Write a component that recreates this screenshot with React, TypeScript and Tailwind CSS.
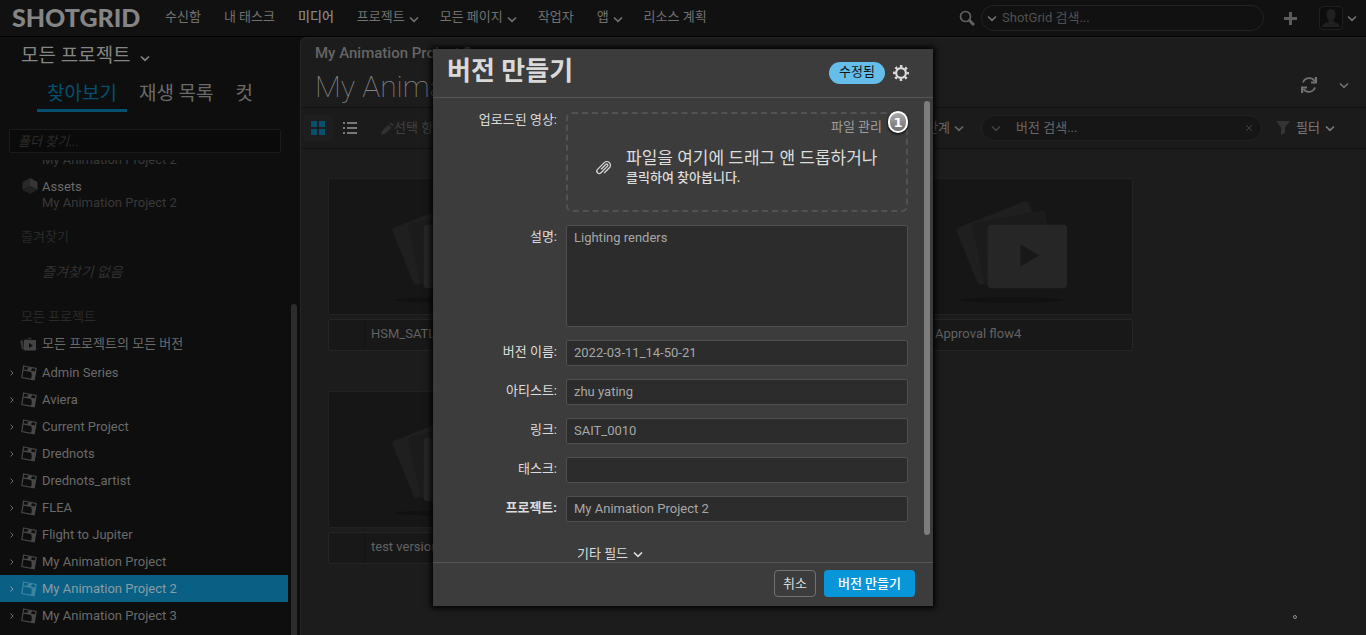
import React from 'react';
import { clsx } from 'clsx';

const navItems = [
  { label: '수신함' },
  { label: '내 태스크' },
  { label: '미디어', active: true },
  { label: '프로젝트', menu: true },
  { label: '모든 페이지', menu: true },
  { label: '작업자' },
  { label: '앱', menu: true },
  { label: '리소스 계획' },
];

const projects = [
  'Admin Series',
  'Aviera',
  'Current Project',
  'Drednots',
  'Drednots_artist',
  'FLEA',
  'Flight to Jupiter',
  'My Animation Project',
  'My Animation Project 2',
  'My Animation Project 3',
];

const versions = ['HSM_SATL_0010', '', 'Approval flow4', 'test version'];

const fields = [
  { id: 'name', label: '버전 이름:', value: '2022-03-11_14-50-21' },
  { id: 'artist', label: '아티스트:', value: 'zhu yating' },
  { id: 'link', label: '링크:', value: 'SAIT_0010' },
  { id: 'task', label: '태스크:', value: '' },
  { id: 'project', label: '프로젝트:', value: 'My Animation Project 2', required: true },
];

const Chevron = ({ className = '' }: { className?: string }) => (
  <svg viewBox="0 0 12 12" className={clsx('w-3 h-3 shrink-0', className)} fill="none" stroke="currentColor" strokeWidth="1.7">
    <path d="M2 4.500l4 3.800 4-3.800" />
  </svg>
);

const ProjectIcon = () => (
  <svg viewBox="0 0 16 16" className="w-4 h-4 shrink-0">
    <path d="M2.600 1L15.200 3.400 13.200 14.900.8 12.500z" fill="none" stroke="currentColor" strokeWidth="1.200" />
    <path d="M2.200 4.200l4 .8 1-2.600 3.800.7-1 2.600 4.900.900-1.700 8.300-3.400-.7c1.200-2.600 1.300-4.800.2-7.200L1.800 5.600z" fill="currentColor" />
  </svg>
);

const AllVersionsIcon = () => (
  <svg viewBox="0 0 16 14" className="w-4 h-3.5 shrink-0 text-[#444444]">
    <path d="M0 4l3-1 1 9-2 1zM3.500 2.800L11 .5l.5 1.700H6L4 4z" fill="currentColor" opacity=".7" />
    <rect x="4" y="3" width="12" height="10.500" rx="1" fill="currentColor" />
    <path d="M9 6v5l4-2.500z" fill="#0e0e0e" />
  </svg>
);

const AssetIcon = () => (
  <svg viewBox="0 0 16 16" className="w-4 h-4 shrink-0">
    <path d="M8 0l7.500 4v8L8 8z" fill="#363636" />
    <path d="M8 0L.5 4v8L8 8z" fill="#292929" />
    <path d="M8 8l7.500 4L8 16 .5 12z" fill="#212121" />
  </svg>
);

const VersionArt = () => (
  <svg viewBox="0 0 240 136" className="w-full h-full">
    <ellipse cx="119" cy="122" rx="54" ry="2.500" fill="#111111" />
    <g strokeLinejoin="round" strokeWidth="7">
      <path d="M67 52l66-26 24 51-69 26z" fill="#1f1f1f" stroke="#1f1f1f" />
      <path d="M83 48l67-13 10 55-65 13z" fill="#1b1b1b" stroke="#1b1b1b" />
    </g>
    <rect x="95" y="46" width="80" height="64" rx="4" fill="#262626" />
    <path d="M128 66v22l19-11z" fill="#181818" />
  </svg>
);

const Header = () => (
  <header className="h-[37px] shrink-0 flex items-center pl-3 pr-2 bg-[#111111] border-b border-black text-[#717171]">
    <div className="w-[149px] shrink-0 pb-0.5 font-[Lato] font-black text-[25px] leading-8 text-[#858585]">SHOTGRID</div>
    <nav className="flex items-center gap-5 pl-1 pb-0.5 whitespace-nowrap">
      {navItems.map((item) => (
        <a key={item.label} href="#" className={clsx('flex items-center', item.active && 'font-medium text-[#858585]', !item.menu && 'pr-[3px]')}>
          {item.label}
          {item.menu && <Chevron className="ml-[3px] mt-1" />}
        </a>
      ))}
    </nav>
    <div className="ml-auto flex items-center">
      <svg viewBox="0 0 16 16" className="w-4 h-4 mr-1.5" fill="none" stroke="#606060">
        <circle cx="6.500" cy="6.500" r="5" strokeWidth="1.700" />
        <path d="M10 10l5 5" strokeWidth="3" />
      </svg>
      <div className="w-[283px] h-[26px] flex items-center rounded-full border border-[#232323] pl-1">
        <Chevron />
        <input aria-label="ShotGrid 검색" placeholder="ShotGrid 검색..." className="flex-1 min-w-0 ml-1 bg-transparent outline-none placeholder:text-[#505050]" />
      </div>
      <button aria-label="추가" className="ml-5">
        <svg viewBox="0 0 13 13" className="w-[13px] h-[13px]">
          <path d="M5 0h3v5h5v3H8v5H5V8H0V5h5z" fill="#5c5c5c" />
        </svg>
      </button>
      <button aria-label="계정" className="ml-[22px] flex items-center gap-[3px]">
        <span className="w-6 h-6 rounded-sm border border-[#202020] bg-[#0d0d0d] flex items-end justify-center pb-0.5">
          <svg viewBox="0 0 20 18" className="w-5 h-[18px]" fill="#202020">
            <path d="M10 0c3 0 4.500 2 4.500 5 0 3-1 5-2 6v2c3 1 6 1.500 6.500 5H1c.5-3.500 3.500-4 6.500-5v-2c-1-1-2-3-2-6 0-3 1.500-5 4.500-5z" />
          </svg>
        </span>
        <Chevron />
      </button>
    </div>
  </header>
);

const Sidebar = () => (
  <aside className="w-[300px] shrink-0 flex flex-col bg-[#0e0e0e] text-[#6a6a6a]">
    <button className="flex items-center gap-2 h-9 pt-0.5 pl-[21px] text-[19px] text-[#858585]">
      모든 프로젝트
      <Chevron className="mt-1" />
    </button>
    <div className="flex items-center gap-3 h-[39px] pl-[37px] text-[19px]">
      <button className="h-full px-2.5 pt-1.5 border-b-[3px] border-[#05506f] text-[#05506f]">찾아보기</button>
      <button className="pt-1">재생 목록</button>
      <button className="ml-2.5 pt-1">컷</button>
    </div>
    <input
      aria-label="폴더 찾기"
      placeholder="폴더 찾기..."
      className="h-6 shrink-0 mt-[17px] ml-[9px] mr-[19px] px-2 rounded-xs border border-[#1b1b1b] bg-[#0a0a0a] italic outline-none placeholder:text-[#2c2c2c]"
    />
    <div className="flex-1 min-h-0 mt-[7px] flex">
      <div className="w-[288px] overflow-hidden">
        <div className="h-[18px] -mt-2 pl-[42px] leading-4 text-[#393939]">My Animation Project 2</div>
        <a href="#" className="flex gap-1 mt-2 pl-[22px]">
          <AssetIcon />
          <span className="pt-[1px] leading-4">
            Assets
            <br />
            <span className="text-[#393939]">My Animation Project 2</span>
          </span>
        </a>
        <h3 className="mt-4 pl-[21px] leading-5 text-[#292929]">즐겨찾기</h3>
        <p className="mt-[15px] pl-[42px] leading-5 italic text-[14px] text-[#313131]">즐겨찾기 없음</p>
        <h3 className="mt-[25px] pl-[21px] leading-5 text-[#292929]">모든 프로젝트</h3>
        <a href="#" className="flex items-center gap-1.5 h-[25px] mt-1 mb-[3px] pl-5">
          <AllVersionsIcon />
          모든 프로젝트의 모든 버전
        </a>
        {projects.map((name) => {
          const selected = name === 'My Animation Project 2';
          return (
            <a key={name} href="#" className={clsx('flex items-center h-[27px] pl-[9px]', selected && 'bg-[#0a6084] text-[#899ba3]')}>
              <svg viewBox="0 0 6 8" className="w-1.5 h-2 mr-1.5 shrink-0" fill="none" stroke="currentColor">
                <path d="M1.500 1.500L4 4 1.500 6.500" />
              </svg>
              <span className={selected ? 'text-[#3d84a2]' : 'text-[#484848]'}>
                <ProjectIcon />
              </span>
              <span className="ml-[5px]">{name}</span>
            </a>
          );
        })}
      </div>
      <div className="w-1.5 ml-[3px] mt-36 rounded-t-full bg-[#2d2d2d]" />
    </div>
  </aside>
);

const Toolbar = () => (
  <div className="h-[41px] shrink-0 flex items-center pl-0.5 pr-[30px] border-b border-[#121212] bg-[#1b1b1b] text-[#5c5c5c]">
    <button aria-label="썸네일 보기" className="w-[30px] h-[26px] flex items-center justify-center rounded-xs bg-[#1e1e1e] text-[#05506f]">
      <svg viewBox="0 0 14 14" className="w-3.5 h-3.5" fill="currentColor">
        <path d="M0 0h6v6H0zM8 0h6v6H8zM0 8h6v6H0zM8 8h6v6H8z" />
      </svg>
    </button>
    <button aria-label="목록 보기" className="ml-2.5 text-[#777777]">
      <svg viewBox="0 0 14 12" className="w-3.5 h-3" fill="currentColor">
        <path d="M0 0h2v2H0zM4 0h10v2H4zM0 5h2v2H0zM4 5h10v2H4zM0 10h2v2H0zM4 10h10v2H4z" />
      </svg>
    </button>
    <button className="ml-6 flex items-center text-[#424242]">
      <svg viewBox="0 0 13 13" className="w-[13px] h-[13px]" fill="#303030">
        <path d="M0 13l1-4 6.500-6.500 3 3L4 12zM8.500 1.500L10 0l3 3-1.500 1.500z" />
      </svg>
      선택 항목 편집
    </button>
    <button className="ml-auto mr-4 flex items-center gap-[3px] text-[#676767]">
      단계
      <Chevron />
    </button>
    <div className="w-[281px] h-[26px] flex items-center rounded-full border border-[#222222] bg-[#161616] px-2">
      <Chevron className="text-[#424242]" />
      <input aria-label="버전 검색" placeholder="버전 검색..." className="flex-1 min-w-0 ml-3.5 bg-transparent outline-none placeholder:text-[#676767]" />
      <button aria-label="지우기">
        <svg viewBox="0 0 8 8" className="w-2 h-2" fill="none" stroke="#424242">
          <path d="M1 1l6 6M7 1L1 7" />
        </svg>
      </button>
    </div>
    <button className="ml-3.5 flex items-center gap-1 text-[#7b7b7b]">
      <svg viewBox="0 0 14 14" className="w-3.5 h-3.5 mr-0.5" fill="#343434">
        <path d="M0 0h14L9 6.500V12l-4 2V6.500z" />
      </svg>
      필터
      <Chevron />
    </button>
  </div>
);

const Main = () => (
  <main className="flex-1 min-w-0 flex flex-col rounded-tl-md border-t border-l border-[#262626] bg-[#1c1c1c]">
    <div className="h-[70px] shrink-0 flex items-center justify-between pl-3.5 pr-4 border-b border-[#121212]">
      <div className="pt-1 whitespace-nowrap">
        <div className="text-[15px] leading-5 font-medium text-[#656565]">My Animation Project 2</div>
        <h1 className="mt-1 text-[30px] leading-10 font-thin text-[#858585]">My Animation Project 2</h1>
      </div>
      <div className="flex items-center gap-5 mt-6 text-[#717171]">
        <button aria-label="새로 고침">
          <svg viewBox="0 0 18 18" className="w-[18px] h-[18px]" fill="none" stroke="currentColor" strokeWidth="1.800">
            <path d="M3 6.500A6.500 6.500 0 0 1 14.500 5M15 11.500A6.500 6.500 0 0 1 3.500 13" />
            <path d="M17 1v6.500h-6v-2h3.800V1zM1 17v-6.500h6v2H3.200V17z" fill="currentColor" stroke="none" />
          </svg>
        </button>
        <button aria-label="페이지 메뉴">
          <Chevron />
        </button>
      </div>
    </div>
    <Toolbar />
    <div className="flex-1 min-h-0 overflow-hidden pl-[27px] pt-[29px] grid grid-cols-[repeat(auto-fill,241px)] auto-rows-min gap-x-[41px] gap-y-10">
      {versions.map((name, index) => (
        <article key={index}>
          <div className="h-[137px] rounded-xs border border-[#222222] bg-[#161616]">
            <VersionArt />
          </div>
          <div className="h-8 mt-1 flex items-center rounded-xs border border-[#252525] bg-[#181818] text-[#626262]">
            <span className="w-9 h-full border-r border-[#131313]" />
            <span className="ml-1.5 pb-0.5">{name}</span>
          </div>
        </article>
      ))}
    </div>
    <div className="h-5 shrink-0 flex justify-end pr-[69px]">
      <span className="w-1 h-1 rounded-full border border-[#8c8c8c]" />
    </div>
  </main>
);

const VersionDialog = () => (
  <div className="absolute inset-0 flex justify-center items-start pt-[49px]">
    <form role="dialog" aria-labelledby="dialog-title" className="w-[500px] flex flex-col bg-[#3c3c3c] text-[#dddddd] shadow-[0_0_6px_2px_#000000]">
      <div className="h-[49px] flex items-center pl-3.5 pr-6 border-b border-[#545454]">
        <h2 id="dialog-title" className="mb-1 text-[26px] leading-8 font-bold text-[#d9d9d9]">버전 만들기</h2>
        <span className="ml-auto h-[22px] px-2.5 rounded-full bg-[#65bde9] leading-5 text-[#141414]">수정됨</span>
        <button type="button" aria-label="설정" className="ml-2">
          <svg viewBox="0 0 16 16" className="w-4 h-4" fill="none" stroke="#dddddd">
            <circle cx="8" cy="8" r="4.900" strokeWidth="2.200" />
            <circle cx="8" cy="8" r="6.900" strokeWidth="2.200" strokeDasharray="2.500 2.919" strokeDashoffset="1.250" />
          </svg>
        </button>
      </div>
      <div className="h-[464px] flex overflow-hidden">
        <div className="flex-1 min-w-0 pt-2.5 pr-4">
          <div className="grid grid-cols-[124px_1fr] gap-x-[9px] gap-y-[13px]">
            <label htmlFor="upload" className="pt-0.5 text-right leading-5">업로드된 영상:</label>
            <div className="relative h-[100px] mt-1 flex items-center gap-3 pl-[26px] pt-3 rounded-md border-2 border-dashed border-[#525252]">
              <svg viewBox="0 0 20 20" className="w-5 h-5 shrink-0" fill="none" stroke="#d4d4d4" strokeWidth="1.300" strokeLinecap="round">
                <path transform="rotate(-45 10 10)" d="M7 13.600h7a3.600 3.600 0 0 0 0-7.200H4.500a2.400 2.400 0 0 0 0 4.800h9.300a1.200 1.200 0 0 0 0-2.400H7.500" />
              </svg>
              <button id="upload" type="button" className="text-left whitespace-nowrap text-[#dddddd]">
                <span className="block text-[17px] leading-5">파일을 여기에 드래그 앤 드롭하거나</span>
                <span className="block leading-5 font-medium">클릭하여 찾아봅니다.</span>
              </button>
              <button type="button" className="absolute top-[3px] right-6 leading-5 text-[#9c9c9c]">파일 관리</button>
              <span className="absolute -top-[3px] -right-0.5 w-5 h-[22px] rounded-full border-2 border-white bg-linear-to-b from-[#ababab] to-[#6f6f6f] text-center font-['DejaVu_Sans'] leading-[19px] font-bold text-white shadow-[0_1px_3px_#000000]">1</span>
            </div>
            <label htmlFor="description" className="pt-0.5 text-right leading-5">설명:</label>
            <textarea
              id="description"
              defaultValue="Lighting renders"
              className="h-[102px] resize-none rounded-xs border border-[#505050] bg-[#2c2c2c] px-[7px] py-0.5 leading-5 text-[#a7a7a7] outline-none"
            />
            {fields.map((field) => (
              <React.Fragment key={field.id}>
                <label htmlFor={field.id} className={clsx('pt-0.5 text-right leading-5', field.required && 'font-bold')}>
                  {field.label}
                </label>
                <input
                  id={field.id}
                  defaultValue={field.value}
                  className="min-w-0 h-[26px] rounded-xs border border-[#505050] bg-[#2c2c2c] px-[7px] pb-0.5 text-[#a7a7a7] outline-none"
                />
              </React.Fragment>
            ))}
          </div>
          <button type="button" className="mt-[22px] ml-36 flex items-center gap-1 leading-5">
            기타 필드
            <Chevron />
          </button>
        </div>
        <div className="w-1.5 h-[434px] mt-[3px] mr-[3px] rounded-full bg-[#7d7d7d]" />
      </div>
      <div className="h-11 flex items-center justify-end gap-2 pb-0.5 pr-[18px] border-t border-[#545454]">
        <button type="button" className="h-[27px] px-2 rounded-sm border border-[#717171]">취소</button>
        <button type="submit" className="h-[27px] px-3.5 rounded-sm bg-[#0896d9] font-medium text-white">버전 만들기</button>
      </div>
    </form>
  </div>
);

const App = () => {
  return (
    <div className="relative h-screen overflow-hidden flex flex-col bg-[#0e0e0e] font-[Roboto,'Noto_Sans_CJK_KR',sans-serif] text-[13px]">
      <Header />
      <div className="flex-1 min-h-0 flex">
        <Sidebar />
        <Main />
      </div>
      <VersionDialog />
    </div>
  );
};

export default App;
